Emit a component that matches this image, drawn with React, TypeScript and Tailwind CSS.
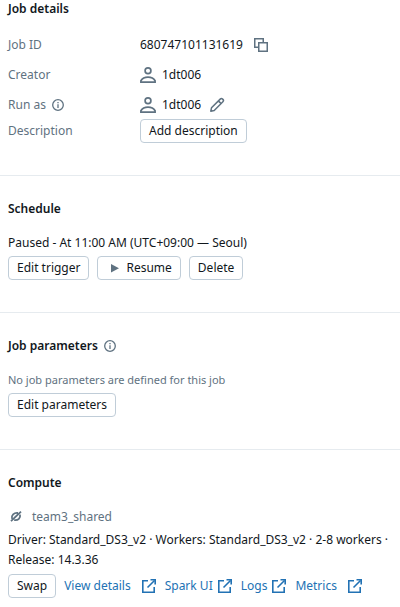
import type { ReactNode } from 'react';

function CopyIcon() {
  return (
    <svg className="size-4 text-[#5f7281]" viewBox="0 0 16 16" fill="none" stroke="currentColor" strokeWidth="1.5" aria-hidden="true">
      <path d="M5.5 10.25H1.75v-8.5h8.5V5.5" />
      <path d="M5.75 5.75h8.5v8.5h-8.5z" />
    </svg>
  );
}

function UserIcon() {
  return (
    <svg className="size-4 text-[#5f7281]" viewBox="0 0 16 16" fill="none" stroke="currentColor" strokeWidth="1.7" aria-hidden="true">
      <circle cx="8" cy="3.8" r="2.900" />
      <path d="M.9 15.100v-1.300C2.300 11.400 5 10.200 8 10.200s5.700 1.200 7.100 3.600v1.300z" />
    </svg>
  );
}

function InfoIcon() {
  return (
    <svg className="size-3 text-[#5f7281]" viewBox="0 0 12 12" fill="none" stroke="currentColor" strokeWidth="1.3" aria-hidden="true">
      <circle cx="6" cy="6" r="5.300" />
      <path d="M6 5.300V9M6 3v1.300" />
    </svg>
  );
}

function PencilIcon() {
  return (
    <svg className="size-4 text-[#5f7281]" viewBox="0 0 16 16" fill="none" stroke="currentColor" strokeWidth="1.500" strokeLinejoin="round" aria-hidden="true">
      <path d="M1.800 14.200l.7-3.400 8.700-8.700c.7-.7 1.700-.7 2.400 0l.3.300c.7.7.7 1.700 0 2.400l-8.700 8.700zM9.400 3.900l2.700 2.700" />
    </svg>
  );
}

function PlayIcon() {
  return (
    <svg className="size-4 text-[#5f7281]" viewBox="0 0 16 16" fill="currentColor" aria-hidden="true">
      <path d="M5 4v8.500l8-4.250z" />
    </svg>
  );
}

function StoppedIcon() {
  return (
    <svg className="size-4 text-[#5f7281]" viewBox="0 0 16 16" fill="none" stroke="currentColor" strokeWidth="1.800" aria-hidden="true">
      <path d="M4 9.800C3 6.300 6 3.400 10 3.900M6.200 11c4 .6 6.600-2 5.800-5.400M3 12.200L13 2.600M6 9.200l4-3.800" />
    </svg>
  );
}

function ExternalIcon() {
  return (
    <svg className="size-4" viewBox="0 0 16 16" fill="none" stroke="currentColor" strokeWidth="1.600" aria-hidden="true">
      <path d="M7 2.800H1.800v11.400h11.400V9" />
      <path d="M6.500 9.500l7-7" />
      <path d="M9.500 1.800h4.700v4.700" />
    </svg>
  );
}

function Button({ children }: { children: ReactNode }) {
  return (
    <button type="button" className="flex h-6 items-center rounded border border-[#c0cdd8] bg-white px-2 whitespace-nowrap text-[#11171c]">
      {children}
    </button>
  );
}

function Section({ title, info, children }: { title: string; info?: boolean; children: ReactNode }) {
  return (
    <section className="border-b border-[#e6ebef] px-2 pt-6 pb-8 first:pt-0 last:border-b-0 last:pb-2">
      <div className="mb-4 flex items-center gap-1.5">
        <h2 className="font-semibold">{title}</h2>
        {info && <InfoIcon />}
      </div>
      {children}
    </section>
  );
}

function Detail({ label, info, children }: { label: string; info?: boolean; children: ReactNode }) {
  return (
    <div className="flex items-center">
      <dt className="flex w-33 shrink-0 items-center gap-1.5 text-[#5f7281]">
        {label}
        {info && <InfoIcon />}
      </dt>
      <dd className="flex items-center">{children}</dd>
    </div>
  );
}

const computeLinks = [
  { label: 'View details', gap: 'gap-2.5' },
  { label: 'Spark UI', gap: 'gap-1' },
  { label: 'Logs', gap: 'gap-1' },
  { label: 'Metrics', gap: 'gap-2.5' },
];

export default function App() {
  return (
    <main className="bg-white font-['Noto_Sans','Open_Sans',sans-serif] text-[12px] leading-[18px] text-[#11171c]">
      <Section title="Job details">
        <dl className="flex flex-col gap-3 pt-0.5">
          <Detail label="Job ID">
            <span>680747101131619</span>
            <button type="button" aria-label="Copy job ID" className="ml-2.5"><CopyIcon /></button>
          </Detail>
          <Detail label="Creator">
            <UserIcon />
            <span className="ml-1.5">1dt006</span>
          </Detail>
          <Detail label="Run as" info>
            <UserIcon />
            <span className="ml-1.5">1dt006</span>
            <button type="button" aria-label="Edit run as" className="ml-2"><PencilIcon /></button>
          </Detail>
          <div className="-mt-[7px]">
            <Detail label="Description">
              <Button>Add description</Button>
            </Detail>
          </div>
        </dl>
      </Section>

      <Section title="Schedule">
        <p>Paused - At 11:00 AM (UTC+09:00 — Seoul)</p>
        <div className="mt-1 flex gap-2">
          <Button>Edit trigger</Button>
          <Button>
            <PlayIcon />
            <span className="ml-1">Resume</span>
          </Button>
          <Button>Delete</Button>
        </div>
      </Section>

      <Section title="Job parameters" info>
        <p className="text-[11px] text-[#5f7281]">No job parameters are defined for this job</p>
        <div className="mt-1 flex">
          <Button>Edit parameters</Button>
        </div>
      </Section>

      <Section title="Compute">
        <div className="flex items-center gap-2 text-[#5f7281]">
          <StoppedIcon />
          <span>team3_shared</span>
        </div>
        <p className="mt-1 leading-5">Driver: Standard_DS3_v2 · Workers: Standard_DS3_v2 · 2-8 workers · Release: 14.3.36</p>
        <div className="mt-1 flex items-center gap-2">
          <Button>Swap</Button>
          {computeLinks.map(({ label, gap }) => (
            <a key={label} href="#" className={`flex items-center ${gap} whitespace-nowrap text-[#2272b4]`}>
              {label}
              <ExternalIcon />
            </a>
          ))}
        </div>
      </Section>
    </main>
  );
}
